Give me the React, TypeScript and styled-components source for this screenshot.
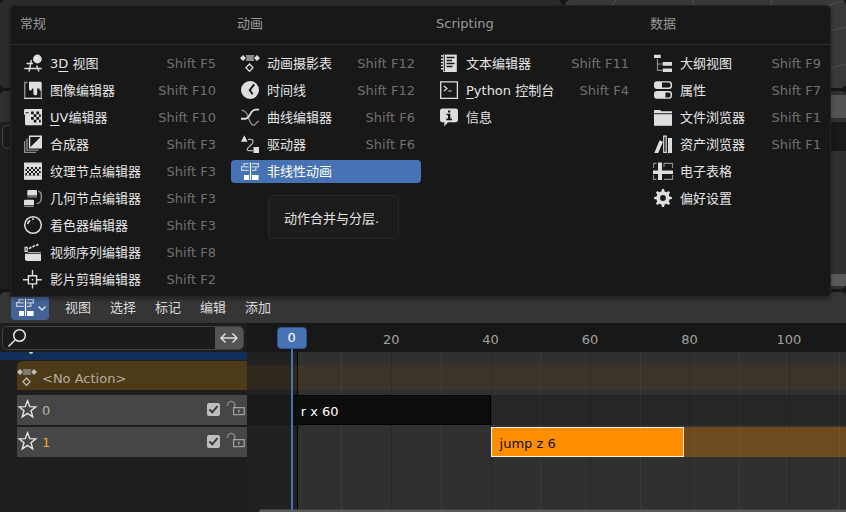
import React from "react";
import styled, { createGlobalStyle, css } from "styled-components";

const GlobalStyle = createGlobalStyle`
  *, *::before, *::after { box-sizing: border-box; }
  body {
    margin: 0;
    background: #151515;
    color: #e4e4e4;
    font-family: "DejaVu Sans", "Noto Sans CJK SC", sans-serif;
    font-size: 13px;
    line-height: 20px;
    overflow: hidden;
  }
  button, input { font: inherit; color: inherit; }
`;

const bareButton = css`
  margin: 0;
  padding: 0;
  border: 0;
  background: none;
  cursor: pointer;
`;

/* ---------- icons ---------- */

const Glyph = styled.svg`
  display: block;
  flex: none;
  width: 21px;
  height: 21px;
  fill: none;
  stroke: none;
`;

const INK = "#dedede";
const DIM = "#8c8c8c";
const DARK = "#181818";

type IconName =
  | "view3d" | "image" | "uv" | "compositor" | "texture" | "geometry" | "shader"
  | "sequencer" | "clip" | "dopesheet" | "time" | "graph" | "driver" | "nla"
  | "text" | "console" | "info" | "outliner" | "properties" | "file" | "asset"
  | "spreadsheet" | "preferences";

const gearTeeth = [0, 45, 90, 135, 180, 225, 270, 315];

const drawings: Record<IconName, React.ReactNode> = {
  view3d: (
    <>
      <path d="M2.5 9.5H9M.3 14.5H17.7M7.4 6 5 17.6M12.6 11.5 15 17.6" stroke={INK} strokeWidth="1.4" />
      <circle cx="13.4" cy="5" r="4.4" fill={INK} />
      <circle cx="12.4" cy="4" r="1.2" fill="#fff" />
    </>
  ),
  image: (
    <>
      <path d="M3.5 1.5H.7V17.4H17.3V1.5" stroke={DIM} strokeWidth="1.4" />
      <path d="M.2 17.4H17.9" stroke={INK} strokeWidth="1.2" />
      <path d="M5 .8H17.3V9A1 1 0 0 1 15.5 9V7.6H13.2V12.4A1.9 1.9 0 0 1 9.4 12.4V7.4H8V8A1.5 1.5 0 0 1 5 8Z" fill={INK} />
    </>
  ),
  uv: (
    <>
      <path d="M1.6 1H18V17.3H1.8L1 16V7L0 6V2.4A1.5 1.5 0 0 1 1.6 1Z" fill={INK} />
      <path d="M7 3.6h2.7v2.7H7zM12.4 3.6h2.7v2.7h-2.7zM9.7 6.3h2.7V9H9.7zM15.1 6.3h1.6V9h-1.6zM7 9h2.7v2.7H7zM12.4 9h2.7v2.7h-2.7zM9.7 11.7h2.7v2.7H9.7zM15.1 11.7h1.6v2.7h-1.6zM1.5 4.2h3v1h-3z" fill={DARK} />
    </>
  ),
  compositor: (
    <>
      <path d="M.7 6V17.4H12.2M3 3.6V15.1H14.6" stroke={DIM} strokeWidth="1.4" />
      <path d="M5.6 1.2H17.3V12.8H5.6Z" stroke={INK} strokeWidth="1.4" />
      <path d="M17.6 1V13H5.4Z" fill={INK} />
    </>
  ),
  texture: (
    <>
      <path d="M.7 1.2H17.3V17.2H.7Z" stroke={INK} strokeWidth="1.3" />
      <path d="M.7 1.2H17.3V5H.7ZM.7 13.5h16.6v3.7H.7Z" fill={INK} />
      <path d="M1 5h2v2H1zM5 5h2v2H5zM9 5h2v2H9zM13 5h2v2h-2zM3 7h2v2H3zM7 7h2v2H7zM11 7h2v2h-2zM15 7h2v2h-2zM1 9h2v2H1zM5 9h2v2H5zM9 9h2v2H9zM13 9h2v2h-2zM3 11h2v2.6H3zM7 11h2v2.6H7zM11 11h2v2.6h-2zM15 11h2v2.6h-2z" fill={INK} />
    </>
  ),
  geometry: (
    <>
      <path d="M4.6 1H12a1 1 0 0 1 1 1V6.4H3.3V2.3A1.3 1.3 0 0 1 4.6 1ZM1.3 10.8H9a1 1 0 0 1 1 1v4.4H0V12.1a1.3 1.3 0 0 1 1.3-1.3Z" fill={INK} />
      <path d="M3.4 7.8H13M.2 17.5H10" stroke={DIM} strokeWidth="1.2" />
      <path d="M14.2 2.2C17.5 3 17.3 5 17.3 8S17.6 13.6 12.6 14.8" stroke={DIM} strokeWidth="1.5" />
    </>
  ),
  shader: (
    <>
      <circle cx="9" cy="9" r="8.3" stroke={INK} strokeWidth="1.5" />
      <path d="M3.7 8.2Q4 5.6 6.2 4.5M8.2 3.2H9.8" stroke={INK} strokeWidth="1.7" />
    </>
  ),
  sequencer: (
    <>
      <path d="M1.1 4.3H3.2V8.3H1.1Z" stroke={INK} strokeWidth="1.2" />
      <path d="M4.6 5.3 6.8 3.4 7.6 4.7 5.6 6.3ZM8.2 3.4 10.4 1.8 11 3.2 9 4.6ZM11.8 1.9 14 .7 14.5 2.3 12.6 3.2Z" fill={INK} stroke={INK} strokeWidth=".3" />
      <path d="M4 9H17V9.8H4ZM1 10.8H17V18H2.4L1 16.8Z" fill={INK} />
    </>
  ),
  clip: (
    <path d="M4.4 5.7H12.6V13.9H4.4ZM8.5 0V5M8.5 14.6V18.6M-1 9.8H4M13.2 9.8H17.8M7.8 9.8H9.2" stroke={INK} strokeWidth="1.4" />
  ),
  dopesheet: (
    <>
      <path d="M4.5 1H13.5Q11.5 4 13.5 7H4.5Q6.5 4 4.5 1Z" fill={DIM} />
      <path d="M2 1 5 4 2 7-1 4ZM16 1 19 4 16 7 13 4Z" fill={INK} />
      <path d="M8.5 10 12 13.7 8.5 17.4 5 13.7Z" stroke={INK} strokeWidth="1.3" />
    </>
  ),
  time: (
    <>
      <circle cx="9" cy="9" r="9" fill={INK} />
      <path d="M13.2 3.4 8.8 9 11.6 13.2" stroke={DARK} strokeWidth="2" />
    </>
  ),
  graph: (
    <>
      <path d="M.6 2.2C5 2.3 6 6 7.5 10S10 17.2 12.5 17.2 15 13.5 18 13.2" stroke={DIM} strokeWidth="1.4" />
      <path d="M0 10.7H4.5C9.5 10.7 8.5 1.6 15 1.6H18" stroke={INK} strokeWidth="1.9" />
    </>
  ),
  driver: (
    <>
      <path d="M0 6.8 3.3.3 6.6 6.8Z" fill={INK} />
      <path d="M12.5 12H18V18H12.5Z" fill={INK} />
      <path d="M7 4.3H9.5C13 4.3 12.5 7.5 10.5 9.5L7 12.8C5.6 14.5 6 15.7 8 15.7H12.5" stroke="#b8b8b8" strokeWidth="1.2" />
    </>
  ),
  nla: (
    <>
      <path d="M7.7 1.6H3V4.6H.6V8.4H7.7M7.7 4.9H3.5M11 1.6H17.4V4.9H14.8V8.4H11M11 4.9H14.8" stroke="#fff" strokeOpacity=".65" strokeWidth="1.3" />
      <path d="M9.5 .5V18" stroke="#fff" strokeWidth="1.2" />
      <path d="M3 13H8V18H3ZM11 13H17.6V18H11Z" fill="#fff" />
    </>
  ),
  text: (
    <>
      <path d="M3 .6H16.8V18H3Z" fill={INK} />
      <path d="M1 2H4M1 5.2H4M1 8.4H4M1 11.6H4M1 14.8H4" stroke={INK} strokeWidth="1.5" />
      <path d="M4.3 1V17.5" stroke={DARK} strokeWidth="1" />
      <path d="M6.5 3.5H14.5M6.5 6.5H12M6.5 9.5H14.5M6.5 12.5H12.5" stroke={DARK} strokeWidth="1.3" />
    </>
  ),
  console: (
    <>
      <path d="M.7 .9H17.4V17.3H.7Z" stroke={INK} strokeWidth="1.3" />
      <path d="M4 5 7 7.5 4 10M8.3 10H11.7" stroke={INK} strokeWidth="1.2" />
    </>
  ),
  info: (
    <>
      <path d="M2.5.5H15.5A2.5 2.5 0 0 1 18 3V11.8A2.5 2.5 0 0 1 15.5 14.3H8L4.3 18.6V14.3H2.5A2.5 2.5 0 0 1 0 11.8V3A2.5 2.5 0 0 1 2.5.5Z" fill={INK} />
      <path d="M8 2.5h2.3v2H8zM6.5 5.7H10.3V10.6H12V12.2H6.3V10.6H8V7.2H6.5Z" fill={DARK} />
    </>
  ),
  outliner: (
    <>
      <path d="M3.5 5V16.3H8M3.5 10H8" stroke={DIM} strokeWidth="1.2" />
      <path d="M0 .8H6.7V4H0ZM8.7 8H18V11.8H8.7ZM8.7 14.4H18V18H8.7Z" fill={INK} />
    </>
  ),
  properties: (
    <>
      <rect x="0" y=".2" width="18" height="7.8" rx="3" fill={INK} />
      <rect x="0" y="10" width="18" height="7.8" rx="3" fill={INK} />
      <path d="M8 1.5H14.6A2 2 0 0 1 16.6 3.5V4.6A2 2 0 0 1 14.6 6.6H8ZM11.5 11.4H14.6A2 2 0 0 1 16.6 13.4V14.4A2 2 0 0 1 14.6 16.4H11.5Z" fill={DARK} />
    </>
  ),
  file: (
    <>
      <path d="M0 5V3Q0 2 1 2H6L7.5 3.2H18V5.2H0Z" fill={INK} />
      <path d="M0 6.2H18V17.8H0Z" fill={INK} />
    </>
  ),
  asset: (
    <>
      <path d="M5.6 5.2 9 6.7 4.2 18H.3Z" fill={INK} />
      <path d="M9.7 1.2H12.2V17.4H9.7Z" stroke={INK} strokeWidth="1.2" />
      <path d="M14 3H18V18H14Z" fill={INK} />
    </>
  ),
  spreadsheet: (
    <>
      <path d="M-.5 6V1.3H2.5M10 1.3H18.5V6M10 5V1.3M-.5 13V17.3H2.5M10 17.3H18.5V13" stroke={DIM} strokeWidth="1.2" />
      <path d="M4 .5H8V18H4ZM-1 8.5H19V12H-1Z" fill={INK} />
    </>
  ),
  preferences: (
    <>
      <circle cx="9" cy="9" r="4.8" stroke={INK} strokeWidth="3.8" />
      {gearTeeth.map((angle) => (
        <path key={angle} d="M7.4 3 7.9.1H10.1L10.6 3Z" fill={INK} transform={`rotate(${angle} 9 9)`} />
      ))}
    </>
  ),
};

const Icon = ({ name }: { name: IconName }) => (
  <Glyph viewBox="-1 -1 21 21" aria-hidden="true">{drawings[name]}</Glyph>
);

/* ---------- areas behind the menu ---------- */

const Screen = styled.div`
  position: relative;
  display: flex;
  flex-direction: column;
  gap: 3px;
  min-height: 100vh;
`;

const UpperRow = styled.div`
  display: grid;
  grid-template-columns: 2fr 1fr;
  gap: 3px;
  height: 88px;
`;

const Area = styled.div<{ $tone: string }>`
  overflow: hidden;
  border-radius: 5px;
  background: ${(p) => p.$tone};
`;

const ViewportLines = styled.svg`
  display: block;
  width: 100%;
  height: 88px;
  fill: none;
  stroke: #505050;
`;

const MiddleArea = styled.div`
  display: flex;
  flex-direction: column;
  height: 198px;
  overflow: hidden;
  border-radius: 5px;
  background: #303030;
`;

const MiddleHeader = styled.div`
  display: flex;
  justify-content: flex-end;
  align-items: center;
  height: 31px;
  background: #303030;
`;

const MiddleButton = styled.div`
  width: 120px;
  height: 23px;
  background: #545454;
`;

const MiddleBody = styled.div`
  display: grid;
  grid-template-columns: 247px 1fr;
  flex: 1;
`;

const MiddleChannels = styled.div`
  padding: 3px 2px;
  background: #1e1e1e;
`;

const MiddleSearch = styled.div`
  height: 24px;
  border: 1px solid #404040;
  border-radius: 5px;
  background: #1b1b1b;
`;

const MiddleTrack = styled.div`
  display: flex;
  flex-direction: column;
  justify-content: space-between;
  border-top: 29px solid #191919;
`;

const MiddleScroll = styled.div`
  height: 12px;
  margin: auto 0 3px 12px;
  background: #595959;
`;

/* ---------- editor type menu ---------- */

const Popup = styled.nav`
  position: absolute;
  z-index: 5;
  top: 5px;
  left: 10px;
  right: 15px;
  border: 1px solid #242424;
  border-radius: 5px 5px 4px 0;
  background: #181818;
  box-shadow: 0 2px 4px rgba(0, 0, 0, 0.35);
`;

const PopupRow = styled.div`
  display: grid;
  grid-template-columns: 208fr 190fr 205fr 183fr;
  column-gap: 9px;
  padding: 0 3px;
`;

const PopupHead = styled(PopupRow)`
  height: 39px;
  align-items: center;
  border-bottom: 1px solid #303030;
  color: #989898;
`;

const PopupBody = styled(PopupRow)`
  padding-top: 7px;
  padding-bottom: 5px;
`;

const ColumnTitle = styled.h2`
  margin: 0;
  padding: 0 6px 2px;
  font-size: 13px;
  font-weight: 400;
`;

const Column = styled.ul`
  display: flex;
  flex-direction: column;
  gap: 4px;
  margin: 0;
  padding: 0;
  list-style: none;
`;

const Entry = styled.li`
  position: relative;
`;

const EntryButton = styled.button<{ $active?: boolean }>`
  ${bareButton}
  display: flex;
  align-items: center;
  gap: 6px;
  width: 100%;
  height: 23px;
  padding: 0 6px 0 9px;
  border-radius: 4px;
  text-align: left;
  white-space: nowrap;
  background: ${(p) => (p.$active ? "#4772b3" : "transparent")};
  color: ${(p) => (p.$active ? "#fff" : "#e4e4e4")};
`;

const EntryLabel = styled.span`
  flex: 1;

  u { text-underline-offset: 3px; }
`;

const Shortcut = styled.kbd`
  font-family: inherit;
  font-size: 13px;
  color: #707070;
`;

const Tooltip = styled.div`
  position: absolute;
  top: 35px;
  left: 37px;
  padding: 13px 19px 9px 15px;
  border: 1px solid #282828;
  border-radius: 4px;
  background: #1c1c1c;
  white-space: nowrap;
`;

interface Item {
  icon: IconName;
  label: React.ReactNode;
  keys?: string;
  tip?: string;
}

const menu: { title: string; items: Item[] }[] = [
  {
    title: "常规",
    items: [
      { icon: "view3d", label: <>3<u>D</u> 视图</>, keys: "Shift F5" },
      { icon: "image", label: "图像编辑器", keys: "Shift F10" },
      { icon: "uv", label: <><u>U</u>V编辑器</>, keys: "Shift F10" },
      { icon: "compositor", label: "合成器", keys: "Shift F3" },
      { icon: "texture", label: "纹理节点编辑器", keys: "Shift F3" },
      { icon: "geometry", label: "几何节点编辑器", keys: "Shift F3" },
      { icon: "shader", label: "着色器编辑器", keys: "Shift F3" },
      { icon: "sequencer", label: "视频序列编辑器", keys: "Shift F8" },
      { icon: "clip", label: "影片剪辑编辑器", keys: "Shift F2" },
    ],
  },
  {
    title: "动画",
    items: [
      { icon: "dopesheet", label: "动画摄影表", keys: "Shift F12" },
      { icon: "time", label: "时间线", keys: "Shift F12" },
      { icon: "graph", label: "曲线编辑器", keys: "Shift F6" },
      { icon: "driver", label: "驱动器", keys: "Shift F6" },
      { icon: "nla", label: "非线性动画", tip: "动作合并与分层." },
    ],
  },
  {
    title: "Scripting",
    items: [
      { icon: "text", label: "文本编辑器", keys: "Shift F11" },
      { icon: "console", label: <><u>P</u>ython 控制台</>, keys: "Shift F4" },
      { icon: "info", label: "信息" },
    ],
  },
  {
    title: "数据",
    items: [
      { icon: "outliner", label: "大纲视图", keys: "Shift F9" },
      { icon: "properties", label: "属性", keys: "Shift F7" },
      { icon: "file", label: "文件浏览器", keys: "Shift F1" },
      { icon: "asset", label: "资产浏览器", keys: "Shift F1" },
      { icon: "spreadsheet", label: "电子表格" },
      { icon: "preferences", label: "偏好设置" },
    ],
  },
];

const EditorMenu = () => (
  <Popup aria-label="编辑器类型">
    <PopupHead>
      {menu.map((column) => <ColumnTitle key={column.title}>{column.title}</ColumnTitle>)}
    </PopupHead>
    <PopupBody>
      {menu.map((column) => (
        <Column key={column.title}>
          {column.items.map((item) => (
            <Entry key={item.icon}>
              <EntryButton type="button" $active={Boolean(item.tip)}>
                <Icon name={item.icon} />
                <EntryLabel>{item.label}</EntryLabel>
                {item.keys && <Shortcut>{item.keys}</Shortcut>}
              </EntryButton>
              {item.tip && <Tooltip role="tooltip">{item.tip}</Tooltip>}
            </Entry>
          ))}
        </Column>
      ))}
    </PopupBody>
  </Popup>
);

/* ---------- nonlinear animation editor ---------- */

const Editor = styled.section`
  display: flex;
  flex-direction: column;
  flex: 1;
  overflow: hidden;
  border-radius: 5px 5px 0 0;
  background: #1e1e1e;
`;

const EditorHeader = styled.header`
  display: flex;
  align-items: center;
  gap: 19px;
  height: 31px;
  padding: 0 11px;
  background: #353535;
`;

const EditorType = styled.button`
  ${bareButton}
  display: flex;
  align-items: center;
  gap: 1px;
  width: 38px;
  height: 25px;
  padding-left: 4px;
  margin-right: -3px;
  border-radius: 4px;
  background: #436297;
`;

const Chevron = styled.svg`
  width: 10px;
  height: 10px;
  fill: none;
  stroke: #dcdcdc;
  stroke-width: 1.5;
`;

const HeaderMenu = styled.button`
  ${bareButton}
  color: #dadada;
`;

const EditorBody = styled.div`
  display: grid;
  grid-template-columns: 247px 1fr;
  flex: 1;
`;

const Channels = styled.div`
  display: flex;
  flex-direction: column;
`;

const SearchBar = styled.div`
  display: flex;
  height: 24px;
  margin: 3px 3px 2px 2px;
  overflow: hidden;
  border: 1px solid #404040;
  border-radius: 5px;
  background: #1b1b1b;
`;

const SearchIcon = styled.svg`
  flex: none;
  width: 20px;
  height: 20px;
  margin: 1px 0 0 4px;
  fill: none;
  stroke: #e4e4e4;
  stroke-width: 1.5;
`;

const SearchInput = styled.input`
  flex: 1;
  min-width: 0;
  border: 0;
  outline: 0;
  background: none;
`;

const InvertButton = styled.button`
  ${bareButton}
  display: grid;
  place-items: center;
  width: 28px;
  background: #545454;

  svg { width: 18px; height: 12px; fill: none; stroke: #dcdcdc; stroke-width: 1.5; }
`;

const ObjectRow = styled.div`
  height: 8px;
  padding-left: 29px;
  background: #10305a;

  &::before {
    content: "";
    display: block;
    width: 4px;
    height: 2px;
    border-radius: 0 0 2px 2px;
    background: #c8c8c8;
  }
`;

const ActionRow = styled.div`
  display: flex;
  align-items: flex-start;
  gap: 4px;
  height: 29px;
  margin: 1px 0 5px 17px;
  padding-top: 6px;
  border-radius: 6px 0 0 0;
  background: #4d3a18;
  color: #b5aea0;
  line-height: 23px;

  svg { opacity: 0.8; }
`;

const TrackRow = styled.div<{ $selected?: boolean }>`
  display: flex;
  align-items: center;
  height: 30px;
  margin: 0 0 2px 17px;
  background: #464646;
  color: ${(p) => (p.$selected ? "#f5a623" : "#b4b4b4")};
`;

const TrackName = styled.label`
  flex: 1;
  padding: 2px 0 0 4px;
`;

const IconButton = styled.button`
  ${bareButton}
  margin-bottom: 1px;
`;

const TrackCheck = styled.input`
  appearance: none;
  display: grid;
  place-items: center;
  width: 13px;
  height: 13px;
  margin: 0 6px 1px 0;
  border-radius: 2px;
  background: #bebebe;

  &:checked::before {
    content: "";
    width: 5px;
    height: 9px;
    margin-top: -3px;
    border: solid #3a3a3a;
    border-width: 0 2px 2px 0;
    transform: rotate(42deg);
  }
`;

const Timeline = styled.div`
  position: relative;
  display: flex;
  flex-direction: column;
  overflow: hidden;
  background: #212121;
`;

const Ruler = styled.div`
  position: relative;
  height: 29px;
  background: #171717;
  color: #a2a2a2;
`;

const RulerMark = styled.span`
  position: absolute;
  top: 7px;
  transform: translateX(-50%);
`;

const Playhead = styled.div`
  position: absolute;
  z-index: 2;
  top: 4px;
  bottom: 2px;
  width: 30px;
  margin-left: -15px;
  border-radius: 4px;
  color: #fff;
  text-align: center;
  background: linear-gradient(#4772b3, #4772b3) center / 2px 100% no-repeat;
`;

const PlayheadFrame = styled.div`
  height: 22px;
  line-height: 20px;
  border: 1px solid #35558a;
  border-radius: 4px;
  background: #4772b3;
`;

const Tracks = styled.div`
  position: relative;
  flex: 1;
  padding-top: 13px;
`;

const ActiveRange = styled.div`
  position: absolute;
  top: 0;
  right: 0;
  bottom: 0;
  border-left: 1px solid #000;
  background: #303030;
`;

const GridLine = styled.div<{ $major: boolean }>`
  position: absolute;
  top: 0;
  bottom: 0;
  width: 1px;
  background: ${(p) => (p.$major ? "#282828" : "#3b3b3b")};
`;

const Lane = styled.div<{ $height: number; $gap: number; $fill?: string }>`
  position: relative;
  height: ${(p) => p.$height}px;
  margin-bottom: ${(p) => p.$gap}px;
  background: ${(p) => p.$fill ?? "transparent"};
`;

const Strip = styled.div<{ $active?: boolean }>`
  position: absolute;
  top: 0;
  bottom: 0;
  padding: 6px 8px 0;
  overflow: hidden;
  white-space: nowrap;
  border: 1px solid ${(p) => (p.$active ? "#fff2dc" : "#000")};
  background: ${(p) => (p.$active ? "#ff8d00" : "#0d0d0d")};
  color: ${(p) => (p.$active ? "#111" : "#fff")};
`;

const StripTail = styled.div`
  position: absolute;
  top: 0;
  right: 0;
  bottom: 0;
  background: rgba(255, 141, 0, 0.3);
`;

const TimelineScroll = styled.div`
  position: relative;
  height: 3px;
  margin-left: 12px;
  border-top: 1px solid #404040;
  border-radius: 6px 0 0 0;
  background: #5a5a5a;
`;

const view = { start: -9, end: 111.5 };
const at = (frame: number) => `${((frame - view.start) / (view.end - view.start)) * 100}%`;
const span = (frames: number) => `${(frames / (view.end - view.start)) * 100}%`;

const rulerFrames = [20, 40, 60, 80, 100];
const gridFrames = [10, 20, 30, 40, 50, 60, 70, 80, 90, 100, 110];

const Star = () => (
  <Glyph viewBox="0 0 21 21" aria-hidden="true">
    <path d="M10.5 1.8 12.7 7.6 18.8 7.9 14 11.8 15.7 17.8 10.5 14.4 5.3 17.8 7 11.8 2.2 7.9 8.3 7.6Z" stroke="#e4e4e4" strokeWidth="1.4" />
  </Glyph>
);

const OpenLock = () => (
  <Glyph viewBox="0 0 21 21" aria-hidden="true">
    <path d="M1.6 7V6A3.6 3.6 0 0 1 8.8 6V8.5" stroke="#8e8e8e" strokeWidth="1.3" />
    <path d="M7.6 8.6H18.2V15.6H7.6Z" stroke="#a0a0a0" strokeWidth="1.3" />
    <path d="M12.9 10.8V13.4" stroke="#a0a0a0" strokeWidth="1.4" />
  </Glyph>
);

const Track = ({ name, selected }: { name: string; selected?: boolean }) => (
  <TrackRow $selected={selected}>
    <IconButton type="button" aria-label="独奏"><Star /></IconButton>
    <TrackName htmlFor={`track-${name}`}>{name}</TrackName>
    <TrackCheck id={`track-${name}`} type="checkbox" defaultChecked />
    <IconButton type="button" aria-label="锁定"><OpenLock /></IconButton>
  </TrackRow>
);

const NlaEditor = () => (
  <Editor>
    <EditorHeader>
      <EditorType type="button" aria-label="编辑器类型">
        <Icon name="nla" />
        <Chevron viewBox="0 0 10 10"><path d="M1.5 3.5 5 7 8.5 3.5" /></Chevron>
      </EditorType>
      {["视图", "选择", "标记", "编辑", "添加"].map((name) => (
        <HeaderMenu key={name} type="button">{name}</HeaderMenu>
      ))}
    </EditorHeader>
    <EditorBody>
      <Channels>
        <SearchBar>
          <SearchIcon viewBox="0 0 20 20">
            <circle cx="12.5" cy="7.5" r="5.8" />
            <path d="M8.3 11.7 1.5 18.5" />
          </SearchIcon>
          <SearchInput type="search" aria-label="搜索" />
          <InvertButton type="button" aria-label="反转">
            <svg viewBox="0 0 18 12"><path d="M1 6H17M5.5 1.5 1 6 5.5 10.5M12.5 1.5 17 6 12.5 10.5" /></svg>
          </InvertButton>
        </SearchBar>
        <ObjectRow />
        <ActionRow>
          <Icon name="dopesheet" />
          <span>&lt;No Action&gt;</span>
        </ActionRow>
        <Track name="0" />
        <Track name="1" selected />
      </Channels>
      <Timeline>
        <Ruler>
          {rulerFrames.map((frame) => (
            <RulerMark key={frame} style={{ left: at(frame) }}>{frame}</RulerMark>
          ))}
        </Ruler>
        <Tracks>
          <ActiveRange style={{ left: at(1) }} />
          {gridFrames.map((frame) => (
            <GridLine key={frame} $major={frame % 20 === 0} style={{ left: at(frame) }} />
          ))}
          <Lane $height={25} $gap={5} $fill="rgba(124, 88, 0, 0.14)" />
          <Lane $height={30} $gap={2} $fill="rgba(0, 0, 0, 0.2)">
            <Strip style={{ left: at(0), width: span(40) }}>r x 60</Strip>
          </Lane>
          <Lane $height={30} $gap={2}>
            <Strip $active style={{ left: at(40), width: span(39) }}>jump z 6</Strip>
            <StripTail style={{ left: at(79) }} />
          </Lane>
        </Tracks>
        <TimelineScroll />
        <Playhead style={{ left: at(0) }}>
          <PlayheadFrame>0</PlayheadFrame>
        </Playhead>
      </Timeline>
    </EditorBody>
  </Editor>
);

export default function App() {
  return (
    <>
      <GlobalStyle />
      <Screen>
        <UpperRow>
          <Area $tone="#2b2b2b" />
          <Area $tone="#393939">
            <ViewportLines viewBox="0 0 282 88" preserveAspectRatio="xMaxYMin slice">
              <path d="M48 6 52 0M129 0 130 8M207 0 208 8M262 32 282 27M262 69 282 64M262 6 282 0" />
            </ViewportLines>
          </Area>
        </UpperRow>
        <MiddleArea>
          <MiddleHeader><MiddleButton /></MiddleHeader>
          <MiddleBody>
            <MiddleChannels><MiddleSearch /></MiddleChannels>
            <MiddleTrack><MiddleScroll /></MiddleTrack>
          </MiddleBody>
        </MiddleArea>
        <NlaEditor />
      </Screen>
      <EditorMenu />
    </>
  );
}
